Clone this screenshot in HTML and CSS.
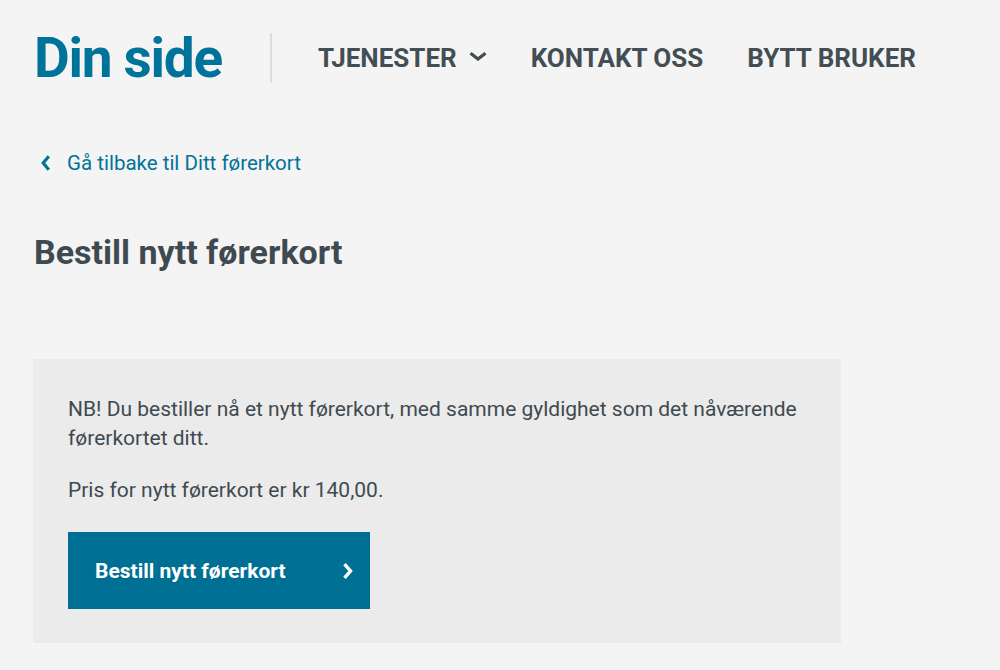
FILE: index.html
```html
<!DOCTYPE html>
<html lang="no">
<head>
    <meta charset="utf-8">
    <title>Din side - Bestill nytt førerkort</title>
    <link rel="stylesheet" href="styles.css">
</head>
<body>
    <header class="site-header">
        <a class="logo" href="#">Din side</a>
        <span class="divider"></span>
        <nav class="main-nav">
            <a href="#" class="nav-item">TJENESTER
                <svg class="nav-caret" width="18" height="9" viewBox="0 0 18 9"><path d="M1.5 1.2 L9 7 L16.5 1.2" fill="none" stroke="currentColor" stroke-width="3.2"/></svg>
            </a>
            <a href="#" class="nav-item">KONTAKT OSS</a>
            <a href="#" class="nav-item">BYTT BRUKER</a>
        </nav>
    </header>

    <main class="content">
        <a class="back-link" href="#">
            <svg width="9" height="16" viewBox="0 0 9 16"><path d="M7.8 1.2 L2.2 8 L7.8 14.8" fill="none" stroke="currentColor" stroke-width="3.2"/></svg>
            Gå tilbake til Ditt førerkort
        </a>

        <h1 class="page-title">Bestill nytt førerkort</h1>

        <section class="order-box">
            <p>NB! Du bestiller nå et nytt førerkort, med samme gyldighet som det nåværende førerkortet ditt.</p>
            <p>Pris for nytt førerkort er kr 140,00.</p>
            <button class="order-button">
                Bestill nytt førerkort
                <svg width="10" height="16" viewBox="0 0 10 16"><path d="M1.5 1.2 L7.5 8 L1.5 14.8" fill="none" stroke="currentColor" stroke-width="3.4"/></svg>
            </button>
        </section>
    </main>
</body>
</html>
```

FILE: styles.css
```css
body {
    margin: 0;
    font-family: Roboto, "Open Sans", sans-serif;
    background-color: #f4f4f4;
    color: #3f4a50;
}

a {
    text-decoration: none;
}

.site-header {
    display: flex;
    align-items: center;
    padding: 33px 0 0 34px;
    height: 50px;
}

.logo {
    font-size: 55px;
    font-weight: 700;
    color: #00739a;
    letter-spacing: -1.3px;
    line-height: 50px;
}

.divider {
    width: 2px;
    height: 50px;
    background-color: #dddddd;
    margin: 0 46px 0 48px;
}

.main-nav {
    display: flex;
    align-items: center;
    gap: 44px;
}

.nav-item {
    display: flex;
    align-items: center;
    gap: 12px;
    font-size: 26px;
    font-weight: 700;
    color: #434e54;
}

.nav-caret {
    margin-top: -4px;
}

.content {
    padding: 0 33px;
}

.back-link {
    display: flex;
    align-items: center;
    gap: 17px;
    margin: 70px 0 0 8px;
    font-size: 20.5px;
    color: #00739a;
    height: 20px;
}

.page-title {
    font-size: 34px;
    font-weight: 700;
    margin: 59px 0 0 1px;
    line-height: 40px;
    color: #3f4a50;
}

.order-box {
    width: 738px;
    margin-top: 87px;
    padding: 36px 35px 34px;
    background-color: #ebebeb;
    box-sizing: content-box;
}

.order-box p {
    margin: 0 0 23px;
    font-size: 21px;
    line-height: 29px;
    color: #3f4a50;
}

.order-box p:last-of-type {
    margin-bottom: 27px;
}

.order-button {
    display: flex;
    align-items: center;
    justify-content: space-between;
    width: 302px;
    height: 77px;
    padding: 0 17px 0 27px;
    border: none;
    background-color: #006f94;
    color: #ffffff;
    font-family: inherit;
    font-size: 21px;
    font-weight: 700;
    cursor: pointer;
}
```
